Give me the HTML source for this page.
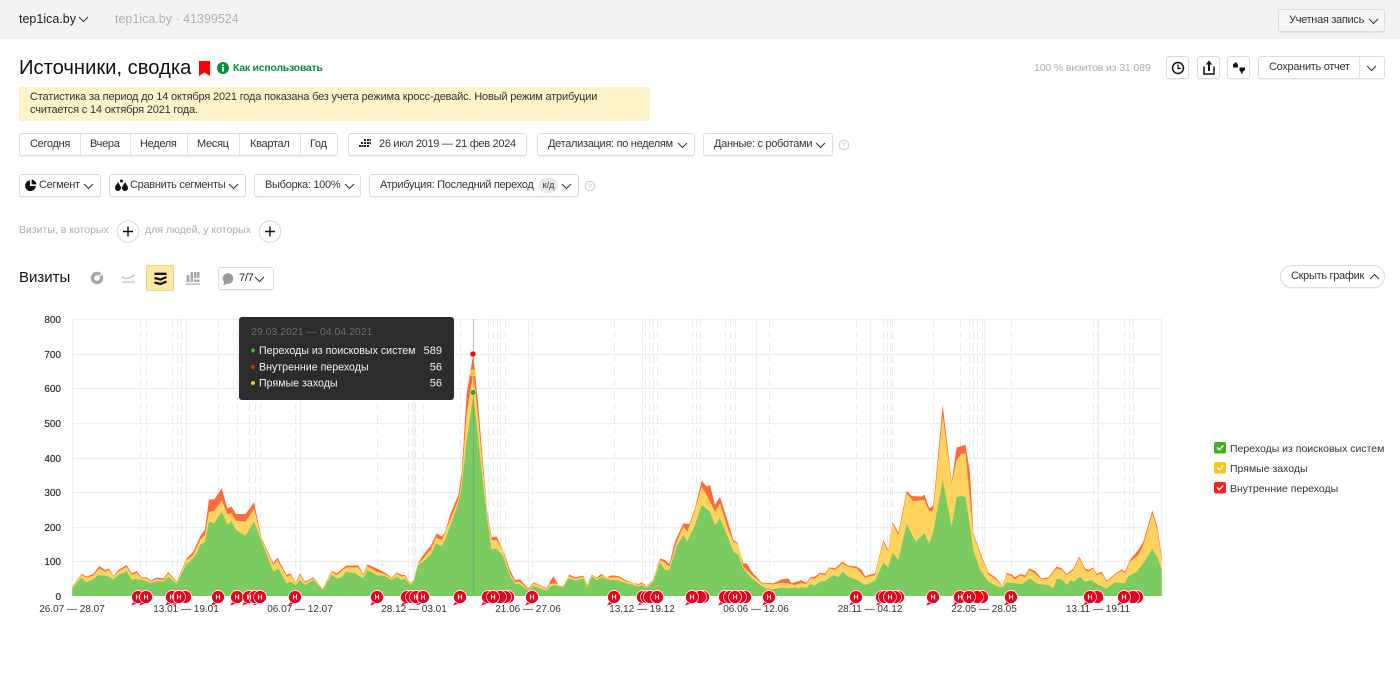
<!DOCTYPE html>
<html lang="ru"><head><meta charset="utf-8"><title>Источники, сводка</title>
<style>
html,body{margin:0;padding:0;background:#fff}
body{width:1400px;height:693px;position:relative;overflow:hidden;font-family:"Liberation Sans",sans-serif;color:#222;font-size:12px}
.t{position:absolute;white-space:nowrap;line-height:16px}
.b{position:absolute;box-sizing:border-box;height:23px;border:1px solid #dcdcdc;border-radius:3px;background:#fff;box-shadow:0 1px 1px rgba(0,0,0,.06);white-space:nowrap;line-height:21px;font-size:11px;letter-spacing:-.3px;color:#333}
.b span{position:absolute;top:0;white-space:nowrap}
.b svg,.ic{position:absolute}
.sep{position:absolute;top:0;bottom:0;width:1px;background:#e2e2e2}
</style></head><body>

<div style="position:absolute;left:0;top:0;width:1400px;height:39px;background:#f4f3f1"></div>
<div class="t" style="left:19px;top:11px;font-size:12.500px;color:#222">tep1ica.by</div>
<svg class="ic" style="left:78px;top:16px" width="11" height="7"><path d="M1 1l4.500 4.500L10 1" fill="none" stroke="#333"/></svg>
<div class="t" style="left:115px;top:11px;font-size:12.500px;color:#b0b0b0">tep1ica.by · 41399524</div>
<div class="b" style="left:1278px;top:9px;width:107px;background:#f7f6f4"><span style="left:10px">Учетная запись</span><svg style="left:89px;top:8px" width="11" height="7"><path d="M1 1l4.500 4.500L10 1" fill="none" stroke="#333"/></svg></div>

<div class="t" style="left:19px;top:55px;font-size:20.200px;line-height:26px;color:#111">Источники, сводка</div>
<svg class="ic" style="left:199px;top:61px" width="11" height="16"><path d="M0 0h11v15l-5.500-3.500L0 15z" fill="#f00"/></svg>
<svg class="ic" style="left:217px;top:62px" width="12" height="12"><circle cx="6" cy="6" r="6" fill="#0a8f3c"/><rect x="5" y="5" width="2" height="4.500" fill="#fff"/><rect x="5" y="2.500" width="2" height="1.500" fill="#fff"/></svg>
<div class="t" style="left:233px;top:60px;font-size:10.500px;color:#0a8a3c;font-weight:bold;letter-spacing:-.25px">Как использовать</div>

<div style="position:absolute;left:19px;top:87px;width:631px;height:34px;background:#fdf3c9;border-radius:2px"></div>
<div class="t" style="left:30px;top:91px;font-size:11px;line-height:13px;letter-spacing:-.17px;color:#333">Статистика за период до 14 октября 2021 года показана без учета режима кросс-девайс. Новый режим атрибуции<br>считается с 14 октября 2021 года.</div>

<div class="t" style="left:1034px;top:60px;font-size:10.500px;letter-spacing:-.13px;color:#aaa">100 % визитов из 31 089</div>
<div class="b" style="left:1166px;top:56px;width:23px"><svg style="left:4px;top:4px" width="14" height="14"><circle cx="7" cy="7" r="5.500" fill="none" stroke="#111" stroke-width="1.500"/><path d="M7 3.500V7.500H10" fill="none" stroke="#111" stroke-width="1.300"/></svg></div>
<div class="b" style="left:1197px;top:56px;width:23px"><svg style="left:5px;top:3px" width="12" height="15"><path d="M1 6.500V14H11V6.500" fill="none" stroke="#111" stroke-width="1.500"/><path d="M6 11V3" stroke="#111" stroke-width="2"/><path d="M2.800 4.500L6 .5l3.200 4z" fill="#111"/></svg></div>
<div class="b" style="left:1227px;top:56px;width:23px"><svg style="left:4px;top:4px" width="14" height="14"><path d="M1 3.500L4 1l2 3v2.500H1zM7.500 6.500H13V9l-2 1.500-1 3-1.500-3-1-1z" fill="#111"/></svg></div>
<div class="b" style="left:1258px;top:56px;width:127px"><span style="left:10px">Сохранить отчет</span><i class="sep" style="left:100px"></i><svg style="left:107px;top:8px" width="11" height="7"><path d="M1 1l4.500 4.500L10 1" fill="none" stroke="#333"/></svg></div>

<div class="b" style="left:19px;top:133px;width:319px"><span style="left:10px">Сегодня</span><i class="sep" style="left:60px"></i><span style="left:70px">Вчера</span><i class="sep" style="left:110px"></i><span style="left:120px">Неделя</span><i class="sep" style="left:167px"></i><span style="left:177px">Месяц</span><i class="sep" style="left:219px"></i><span style="left:230px">Квартал</span><i class="sep" style="left:280px"></i><span style="left:290px">Год</span></div>
<div class="b" style="left:348px;top:133px;width:179px"><svg style="left:10px;top:5px" width="12" height="10" fill="#222"><rect x="5" y="0" width="2" height="2"/><rect x="8" y="0" width="2" height="2"/><rect x="10.500" y="0" width="1.500" height="2"/><rect x="2" y="3" width="2" height="2"/><rect x="5" y="3" width="2" height="2"/><rect x="8" y="3" width="2" height="2"/><rect x="10.500" y="3" width="1.500" height="2"/><rect x="0" y="6" width="2" height="2"/><rect x="2.500" y="6" width="2" height="2"/><rect x="5" y="6" width="2" height="2"/><rect x="8" y="6" width="2" height="2"/></svg><span style="left:30px">26 июл 2019 — 21 фев 2024</span></div>
<div class="b" style="left:537px;top:133px;width:158px"><span style="left:10px">Детализация: по неделям</span><svg style="left:139px;top:8px" width="11" height="7"><path d="M1 1l4.500 4.500L10 1" fill="none" stroke="#333"/></svg></div>
<div class="b" style="left:703px;top:133px;width:130px"><span style="left:10px">Данные: с роботами</span><svg style="left:111px;top:8px" width="11" height="7"><path d="M1 1l4.500 4.500L10 1" fill="none" stroke="#333"/></svg></div>
<svg class="ic" style="left:838px;top:139px" width="12" height="12"><circle cx="6" cy="6" r="4.800" fill="none" stroke="#ccc"/><text x="6" y="8.500" font-size="7" text-anchor="middle" fill="#bbb" font-family="Liberation Sans">?</text></svg>

<div class="b" style="left:19px;top:174px;width:82px"><svg style="left:4px;top:4px" width="13" height="13" viewBox="0 0 12 12"><path d="M5.500 1.200A5 5 0 1 0 11 6.500H5.500z" fill="#111"/><path d="M7 0.500A5 5 0 0 1 11.500 5H7z" fill="#111"/></svg><span style="left:19px">Сегмент</span><svg style="left:63px;top:8px" width="11" height="7"><path d="M1 1l4.500 4.500L10 1" fill="none" stroke="#333"/></svg></div>
<div class="b" style="left:109px;top:174px;width:137px"><svg style="left:4px;top:4px" width="15" height="13"><path d="M4 3C5.500 6 7 7 7 9a3 3 0 0 1-6 0c0-2 1.500-3 3-6zM11 3c1.500 3 3 4 3 6a3 3 0 0 1-6 0c0-2 1.500-3 3-6z" fill="#111"/><circle cx="7.500" cy="2" r="1.500" fill="#111"/></svg><span style="left:20px">Сравнить сегменты</span><svg style="left:118px;top:8px" width="11" height="7"><path d="M1 1l4.500 4.500L10 1" fill="none" stroke="#333"/></svg></div>
<div class="b" style="left:254px;top:174px;width:107px"><span style="left:10px">Выборка: 100%</span><svg style="left:89px;top:8px" width="11" height="7"><path d="M1 1l4.500 4.500L10 1" fill="none" stroke="#333"/></svg></div>
<div class="b" style="left:369px;top:174px;width:210px"><span style="left:10px">Атрибуция: Последний переход</span><span style="left:169px;top:3px;width:19px;height:15px;line-height:14px;background:#e8e8e8;border-radius:8px;text-align:center;font-size:9px;letter-spacing:0">к/д</span><svg style="left:191px;top:8px" width="11" height="7"><path d="M1 1l4.500 4.500L10 1" fill="none" stroke="#333"/></svg></div>
<svg class="ic" style="left:584px;top:180px" width="12" height="12"><circle cx="6" cy="6" r="4.800" fill="none" stroke="#ccc"/><text x="6" y="8.500" font-size="7" text-anchor="middle" fill="#bbb" font-family="Liberation Sans">?</text></svg>

<div class="t" style="left:19px;top:222px;font-size:10.500px;color:#aaa">Визиты, в которых</div>
<svg class="ic" style="left:116px;top:220px" width="24" height="24"><circle cx="12" cy="11.500" r="10.800" fill="#fff" stroke="#d8d8d8"/><path d="M12 6.500v10M7 11.500h10" stroke="#111" stroke-width="1.400"/></svg>
<div class="t" style="left:145px;top:222px;font-size:10.500px;color:#aaa">для людей, у которых</div>
<svg class="ic" style="left:258px;top:220px" width="24" height="24"><circle cx="12" cy="11.500" r="10.800" fill="#fff" stroke="#d8d8d8"/><path d="M12 6.500v10M7 11.500h10" stroke="#111" stroke-width="1.400"/></svg>

<div class="t" style="left:19px;top:269px;font-size:15px;line-height:18px;color:#111">Визиты</div>
<svg class="ic" style="left:90px;top:271px" width="14" height="14"><circle cx="7" cy="7" r="4.500" fill="none" stroke="#a8a8a8" stroke-width="3.500"/><path d="M7 7L13 2" stroke="#fff" stroke-width="1.200"/></svg>
<svg class="ic" style="left:121px;top:272px" width="15" height="12"><path d="M1 5l4 1.500L9 5.500l5-2.500" fill="none" stroke="#b0b0b0"/><path d="M1 10h13" stroke="#b0b0b0"/></svg>
<div style="position:absolute;left:146px;top:265px;width:28px;height:26px;box-sizing:border-box;background:#fde9a3;border:1px solid #efd485;border-radius:2px"></div>
<svg class="ic" style="left:154px;top:272px" width="13" height="13"><path d="M.5 1.800H12.500M.5 6l6 1.500 6-2.500M.5 10.500l6 1.500 6-2.500" fill="none" stroke="#111" stroke-width="2.300"/></svg>
<svg class="ic" style="left:186px;top:271px" width="14" height="14" fill="#aaa"><rect x="0.500" y="4" width="3" height="7"/><rect x="4.500" y="1" width="2.500" height="10"/><rect x="8" y="1" width="2.500" height="6"/><rect x="11" y="1" width="2.500" height="6"/><rect x="8" y="8.500" width="5.500" height="2.500"/><rect x="0" y="12.500" width="14" height="1.200"/></svg>
<div class="b" style="left:218px;top:267px;width:56px"><svg style="left:2px;top:4px" width="14" height="15"><circle cx="7" cy="6.500" r="5.300" fill="#999"/><path d="M3 10l-.5 3.500L7 11z" fill="#999"/></svg><span style="left:20px;color:#222">7/7</span><svg style="left:35px;top:8px" width="11" height="7"><path d="M1 1l4.500 4.500L10 1" fill="none" stroke="#333"/></svg></div>
<div class="b" style="left:1280px;top:265px;width:105px;border-radius:12px"><span style="left:10px">Скрыть график</span><svg style="left:88px;top:7px" width="11" height="7"><path d="M1 6l4.500-4.500L10 6" fill="none" stroke="#333"/></svg></div>

<svg style="position:absolute;left:0;top:0" width="1400" height="693" font-family="Liberation Sans">
<g stroke="#efefef" stroke-width="1.300" fill="none"><path d="M72 319.500H1162M72 354.500H1162M72 388.500H1162M72 423.500H1162M72 458.500H1162M72 492.500H1162M72 527.500H1162M72 561.500H1162"/><path d="M72.500 319V596M186.500 319V596M300.500 319V596M414.500 319V596M528.500 319V596M642.500 319V596M756.500 319V596M870.500 319V596M984.500 319V596M1098.500 319V596M1161.500 319V596"/></g>
<path stroke="#ebebeb" stroke-dasharray="8 4" fill="none" d="M140.500 319V596M146.500 319V596M172.500 319V596M177.500 319V596M181.500 319V596M218.500 319V596M237.500 319V596M249.500 319V596M255.500 319V596M260.500 319V596M295.500 319V596M377.500 319V596M408.500 319V596M412.500 319V596M415.500 319V596M423.500 319V596M460.500 319V596M488.500 319V596M493.500 319V596M497.500 319V596M500.500 319V596M505.500 319V596M532.500 319V596M614.500 319V596M645.500 319V596M649.500 319V596M653.500 319V596M657.500 319V596M692.500 319V596M696.500 319V596M700.500 319V596M725.500 319V596M730.500 319V596M735.500 319V596M769.500 319V596M856.500 319V596M883.500 319V596M887.500 319V596M890.500 319V596M892.500 319V596M933.500 319V596M960.500 319V596M969.500 319V596M973.500 319V596M977.500 319V596M982.500 319V596M1011.500 319V596M1093.500 319V596M1097.500 319V596M1124.500 319V596M1129.500 319V596M1133.500 319V596"/>

<g transform="translate(30,400) scale(.33333)">
<polygon fill="#ff6a3c" points="127,588 127,560 155,522 170,530 190,522 208,498 225,510 237,505 250,528 265,510 290,495 305,520 320,513 335,532 350,532 362,542 380,533 400,535 415,516 440,545 470,475 490,455 510,410 525,388 537,298 553,298 575,265 592,325 605,320 618,342 647,342 672,307 695,415 730,490 742,472 770,525 782,520 797,548 810,520 825,545 850,532 878,567 905,512 920,520 948,497 985,496 1000,522 1012,493 1040,505 1065,518 1085,533 1100,517 1115,525 1125,525 1140,548 1150,543 1165,487 1180,465 1200,440 1200,588"/>
<polygon fill="#ffd45e" points="127,588 127,562 155,525 170,533 190,527 208,505 225,515 237,510 250,530 265,515 290,500 305,525 320,518 335,535 350,535 362,545 380,537 400,540 415,520 440,547 470,480 490,465 510,420 525,405 537,335 553,333 575,300 592,342 605,340 618,362 647,365 672,325 695,418 730,495 742,480 770,530 782,525 797,550 810,525 825,548 850,535 878,568 905,515 920,525 948,502 985,502 1000,525 1012,498 1040,515 1065,522 1085,535 1100,520 1115,530 1125,528 1140,550 1150,545 1165,490 1180,475 1200,450 1200,588"/>
<polygon fill="#7ccb60" points="127,588 127,565 155,532 168,547 185,540 205,525 222,527 235,530 250,538 265,525 290,513 305,540 320,537 335,540 350,543 362,550 380,543 400,545 415,530 440,552 470,490 480,485 497,465 510,435 525,425 537,365 553,370 575,335 592,373 605,365 618,390 647,407 672,365 695,425 730,515 745,505 770,550 782,545 797,555 810,540 825,555 850,540 878,570 905,525 920,535 935,532 948,515 975,520 1000,535 1012,510 1040,525 1065,528 1085,540 1100,530 1115,540 1125,535 1140,555 1150,548 1165,495 1180,485 1200,465 1200,588"/>
</g>
<g transform="translate(400,340) scale(.33333)">
<polygon fill="#ff6a3c" points="90,768 90,622 110,580 125,590 135,578 150,525 175,465 185,400 200,160 220,42 235,200 250,380 262,515 275,592 290,590 315,645 330,690 345,720 360,718 385,745 400,727 420,735 440,745 460,708 475,735 495,738 507,703 525,712 550,707 562,733 575,703 590,713 603,702 620,712 635,706 655,708 680,722 700,728 715,732 725,727 740,740 760,718 780,655 795,660 808,672 825,605 850,550 868,552 885,505 905,422 920,440 930,435 945,495 960,470 985,550 1000,600 1012,607 1030,670 1040,670 1055,695 1085,728 1120,730 1145,718 1165,715 1175,730 1200,722 1200,768"/>
<polygon fill="#ffd45e" points="90,768 90,635 108,593 125,600 135,580 150,540 175,480 185,420 200,220 220,100 235,240 250,400 262,520 275,600 290,600 310,635 330,700 345,725 360,725 385,748 400,730 420,737 440,748 450,732 465,730 490,738 505,708 525,716 550,710 562,735 575,705 590,715 605,708 625,712 655,712 680,725 700,728 715,735 725,730 740,742 760,720 780,660 795,668 808,680 830,605 850,560 862,575 885,510 905,440 920,465 945,515 960,490 985,570 1000,605 1015,612 1030,680 1055,705 1085,730 1120,733 1145,728 1165,730 1185,735 1200,730 1200,768"/>
<polygon fill="#7ccb60" points="90,768 90,648 108,610 125,618 135,600 150,560 175,490 185,440 200,300 220,165 235,300 250,440 262,540 275,628 290,625 310,650 330,710 345,730 360,733 385,752 400,738 420,745 440,752 450,740 465,735 490,742 505,715 530,722 550,715 562,742 575,710 590,720 605,712 625,718 655,722 680,730 700,735 715,740 725,735 740,745 760,725 780,668 795,690 808,690 830,620 850,585 862,605 885,555 905,495 930,515 945,555 960,535 985,595 1000,635 1015,645 1030,685 1055,715 1085,738 1100,745 1120,748 1145,742 1165,745 1185,742 1200,745 1200,768"/>
</g>
<g transform="translate(800,390) scale(.33333)">
<polygon fill="#ff6a3c" points="0,618 0,570 20,578 30,562 45,560 60,548 75,550 88,532 105,535 127,515 145,527 170,530 185,540 195,558 225,550 250,450 265,480 278,396 295,428 320,302 335,318 365,320 373,313 388,355 400,347 428,45 455,275 470,172 497,165 510,250 520,430 540,485 565,548 590,565 607,588 620,549 635,553 645,562 660,552 675,556 688,535 705,543 725,565 745,562 770,530 785,535 800,552 820,535 838,500 855,535 865,540 880,532 890,552 905,545 920,572 945,552 965,538 975,545 990,510 1015,480 1030,455 1057,362 1072,410 1085,500 1085,618"/>
<polygon fill="#ffd45e" points="0,618 0,577 20,582 30,565 45,565 60,552 75,555 88,535 105,540 127,520 145,530 170,535 195,562 225,555 250,455 265,485 278,400 295,435 320,310 340,333 373,330 388,365 400,360 428,75 455,280 470,210 485,192 497,190 520,435 540,490 565,552 590,570 607,590 620,553 635,558 645,568 660,556 675,562 688,540 705,550 725,568 745,566 770,535 785,540 800,555 820,540 838,505 855,540 865,545 880,535 890,555 905,550 920,575 945,555 965,542 975,550 990,515 1015,495 1030,465 1057,370 1072,420 1085,510 1085,618"/>
<polygon fill="#7ccb60" points="0,618 0,592 20,593 30,582 45,587 60,575 75,573 100,555 115,562 127,545 145,560 175,572 195,585 225,573 250,518 265,532 278,487 295,510 320,402 347,455 373,430 388,460 400,425 428,270 455,410 470,322 485,317 497,322 520,480 540,540 565,575 590,588 607,593 620,578 645,580 668,582 688,565 715,582 745,585 760,595 770,567 785,567 800,585 812,570 822,575 840,560 855,575 875,570 890,582 920,595 945,577 975,580 985,560 1010,545 1030,520 1057,477 1072,500 1085,540 1085,618"/>
</g>
<path d="M473.500 319V596" stroke="#8a8a8a" stroke-opacity=".55"/>
<circle cx="473" cy="354" r="3" fill="#f00" stroke="#fff" stroke-opacity=".7" stroke-width=".8"/><circle cx="473" cy="373" r="3" fill="#fc0" stroke="#fff" stroke-opacity=".7" stroke-width=".8"/><circle cx="473" cy="392.500" r="3" fill="#2ea81c" stroke="#fff" stroke-opacity=".7" stroke-width=".8"/>

<g font-size="10" fill="#333" text-anchor="end" stroke="#333" stroke-width=".2"><text x="61" y="323">800</text><text x="61" y="358">700</text><text x="61" y="392">600</text><text x="61" y="427">500</text><text x="61" y="462">400</text><text x="61" y="496">300</text><text x="61" y="531">200</text><text x="61" y="565">100</text><text x="61" y="600">0</text></g>
<g font-size="10" fill="#333" text-anchor="middle"><text x="72" y="612">26.07 — 28.07</text><text x="186" y="612">13.01 — 19.01</text><text x="300" y="612">06.07 — 12.07</text><text x="414" y="612">28.12 — 03.01</text><text x="528" y="612">21.06 — 27.06</text><text x="642" y="612">13.12 — 19.12</text><text x="756" y="612">06.06 — 12.06</text><text x="870" y="612">28.11 — 04.12</text><text x="984" y="612">22.05 — 28.05</text><text x="1098" y="612">13.11 — 19.11</text></g>

<g fill="#e8001c"><path d="M134 601l-3 4.500 6-2zM142 601l-3 4.500 6-2zM168 601l-3 4.500 6-2zM175 601l-3 4.500 6-2zM214 601l-3 4.500 6-2zM233 601l-3 4.500 6-2zM245 601l-3 4.500 6-2zM256 601l-3 4.500 6-2zM291 601l-3 4.500 6-2zM373 601l-3 4.500 6-2zM404 601l-3 4.500 6-2zM419 601l-3 4.500 6-2zM456 601l-3 4.500 6-2zM484 601l-3 4.500 6-2zM528 601l-3 4.500 6-2zM610 601l-3 4.500 6-2zM641 601l-3 4.500 6-2zM688 601l-3 4.500 6-2zM721 601l-3 4.500 6-2zM765 601l-3 4.500 6-2zM852 601l-3 4.500 6-2zM879 601l-3 4.500 6-2zM929 601l-3 4.500 6-2zM956 601l-3 4.500 6-2zM1007 601l-3 4.500 6-2zM1086 601l-3 4.500 6-2zM1120 601l-3 4.500 6-2z"/></g>
<g fill="#e8001c" stroke="#fff" stroke-width=".7">
<circle cx="138" cy="597" r="6.500"/><circle cx="146" cy="597" r="6.500"/>
<circle cx="185" cy="597" r="6.500"/><circle cx="172" cy="597" r="6.500"/><circle cx="179" cy="597" r="6.500"/>
<circle cx="218" cy="597" r="6.500"/><circle cx="237" cy="597" r="6.500"/><circle cx="249" cy="597" r="6.500"/><circle cx="255" cy="597" r="6.500"/><circle cx="260" cy="597" r="6.500"/>
<circle cx="295" cy="597" r="6.500"/><circle cx="377" cy="597" r="6.500"/>
<circle cx="407" cy="597" r="6.500"/><circle cx="412" cy="597" r="6.500"/><circle cx="416" cy="597" r="6.500"/><circle cx="423" cy="597" r="6.500"/>
<circle cx="460" cy="597" r="6.500"/>
<circle cx="508" cy="597" r="6.500"/><circle cx="505" cy="597" r="6.500"/><circle cx="500" cy="597" r="6.500"/><circle cx="488" cy="597" r="6.500"/><circle cx="493" cy="597" r="6.500"/>
<circle cx="532" cy="597" r="6.500"/><circle cx="614" cy="597" r="6.500"/>
<circle cx="643" cy="597" r="6.500"/><circle cx="647" cy="597" r="6.500"/><circle cx="650" cy="597" r="6.500"/><circle cx="657" cy="597" r="6.500"/>
<circle cx="703" cy="597" r="6.500"/><circle cx="700" cy="597" r="6.500"/><circle cx="692" cy="597" r="6.500"/>
<circle cx="745" cy="597" r="6.500"/><circle cx="740" cy="597" r="6.500"/><circle cx="725" cy="597" r="6.500"/><circle cx="730" cy="597" r="6.500"/><circle cx="735" cy="597" r="6.500"/>
<circle cx="769" cy="597" r="6.500"/><circle cx="856" cy="597" r="6.500"/>
<circle cx="898" cy="597" r="6.500"/><circle cx="895" cy="597" r="6.500"/><circle cx="882" cy="597" r="6.500"/><circle cx="885" cy="597" r="6.500"/><circle cx="890" cy="597" r="6.500"/>
<circle cx="933" cy="597" r="6.500"/>
<circle cx="982" cy="597" r="6.500"/><circle cx="977" cy="597" r="6.500"/><circle cx="960" cy="597" r="6.500"/><circle cx="969" cy="597" r="6.500"/>
<circle cx="1011" cy="597" r="6.500"/>
<circle cx="1097" cy="597" r="6.500"/><circle cx="1090" cy="597" r="6.500"/>
<circle cx="1137" cy="597" r="6.500"/><circle cx="1133" cy="597" r="6.500"/><circle cx="1124" cy="597" r="6.500"/>
</g>
<g font-size="7" font-weight="bold" fill="#fff" text-anchor="middle"><text x="138" y="599.500">Н</text><text x="146" y="599.500">Н</text><text x="172" y="599.500">Н</text><text x="179" y="599.500">Н</text><text x="218" y="599.500">Н</text><text x="237" y="599.500">Н</text><text x="249" y="599.500">Н</text><text x="260" y="599.500">Н</text><text x="295" y="599.500">Н</text><text x="377" y="599.500">Н</text><text x="416" y="599.500">Н</text><text x="423" y="599.500">Н</text><text x="460" y="599.500">Н</text><text x="493" y="599.500">Н</text><text x="532" y="599.500">Н</text><text x="614" y="599.500">Н</text><text x="657" y="599.500">Н</text><text x="692" y="599.500">Н</text><text x="735" y="599.500">Н</text><text x="769" y="599.500">Н</text><text x="856" y="599.500">Н</text><text x="890" y="599.500">Н</text><text x="933" y="599.500">Н</text><text x="960" y="599.500">Н</text><text x="969" y="599.500">Н</text><text x="1011" y="599.500">Н</text><text x="1090" y="599.500">Н</text><text x="1124" y="599.500">Н</text></g>

<rect x="239" y="317" width="215" height="83" rx="3" fill="#2c2c2c"/>
<text x="251" y="335" font-size="10.500" fill="#6e6e6e">29.03.2021 — 04.04.2021</text>
<circle cx="253" cy="350.500" r="2" fill="#3fb028"/><circle cx="253" cy="367" r="2" fill="#f01d10"/><circle cx="253" cy="383" r="2" fill="#fc0"/>
<g font-size="10.650" fill="#f2f2f2"><text x="259" y="354">Переходы из поисковых систем</text><text x="259" y="370.500">Внутренние переходы</text><text x="259" y="386.500">Прямые заходы</text></g>
<g font-size="11" fill="#f2f2f2" text-anchor="end"><text x="442" y="354">589</text><text x="442" y="370.500">56</text><text x="442" y="386.500">56</text></g>

<g><rect x="1214" y="442" width="12" height="11.500" rx="2" fill="#3cb41e"/><path d="M1217 447.500l2.300 2.300 4-4.300" fill="none" stroke="#fff" stroke-width="1.400"/><rect x="1214" y="462" width="12" height="11.500" rx="2" fill="#fdc31c"/><path d="M1217 467.500l2.300 2.300 4-4.300" fill="none" stroke="#fff" stroke-width="1.400"/><rect x="1214" y="482" width="12" height="11.500" rx="2" fill="#f5201a"/><path d="M1217 487.500l2.300 2.300 4-4.300" fill="none" stroke="#fff" stroke-width="1.400"/></g>
<g font-size="10.500" fill="#333"><text x="1230" y="452">Переходы из поисковых систем</text><text x="1230" y="472">Прямые заходы</text><text x="1230" y="492">Внутренние переходы</text></g>
</svg>
</body></html>
